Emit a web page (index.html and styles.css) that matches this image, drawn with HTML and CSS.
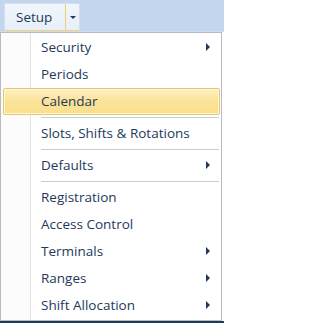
FILE: index.html
```html
<!DOCTYPE html>
<html>
<head>
<meta charset="utf-8">
<link rel="stylesheet" href="styles.css">
</head>
<body>
<div class="toolbar">
  <div class="split-btn">
    <span class="btn-label">Setup</span>
    <span class="btn-drop"><span class="down-arrow"></span></span>
  </div>
</div>
<div class="menu">
  <div class="item">Security<span class="sub"></span></div>
  <div class="item">Periods</div>
  <div class="item active">Calendar</div>
  <div class="sep"></div>
  <div class="item">Slots, Shifts &amp; Rotations</div>
  <div class="sep"></div>
  <div class="item">Defaults<span class="sub"></span></div>
  <div class="sep"></div>
  <div class="item">Registration</div>
  <div class="item">Access Control</div>
  <div class="item">Terminals<span class="sub"></span></div>
  <div class="item">Ranges<span class="sub"></span></div>
  <div class="item">Shift Allocation<span class="sub"></span></div>
</div>
<div class="desk"></div>
</body>
</html>
```

FILE: styles.css
```css
html, body {
  margin: 0;
  padding: 0;
  background: #ffffff;
}
body {
  width: 224px;
  height: 323px;
  overflow: hidden;
  font-family: "Open Sans", "Noto Sans", sans-serif;
  font-size: 13.5px;
  color: #1e395b;
}
.toolbar {
  height: 32px;
  background: #c3d6ed;
  box-sizing: border-box;
  padding: 3px 0 0 4px;
  border-bottom: 1px solid #cfdbea;
}
.split-btn {
  width: 76px;
  height: 28px;
  box-sizing: border-box;
  display: flex;
  background: linear-gradient(#f1f6fc, #e7eff9);
  border: 1px solid #d3dfee;
  border-bottom: 1px solid #f2d37a;
  border-radius: 2px 2px 0 0;
}
.btn-label {
  width: 61px;
  box-sizing: border-box;
  display: flex;
  align-items: center;
  padding-left: 11px;
  padding-bottom: 1px;
  border-right: 1px solid #efcd6f;
}
.btn-drop {
  flex: 1;
  display: flex;
  align-items: center;
  justify-content: center;
}
.down-arrow {
  width: 0;
  height: 0;
  border-left: 3px solid transparent;
  border-right: 3px solid transparent;
  border-top: 3px solid #1e395b;
}
.menu {
  width: 222px;
  box-sizing: border-box;
  border: 1px solid #b8bcc2;
  padding: 1px;
  background: linear-gradient(to right, #fcfcfc 0, #fcfcfc 29px, #e2e3e3 29px, #e2e3e3 30px, #ffffff 30px);
}
.item {
  height: 27px;
  box-sizing: border-box;
  display: flex;
  align-items: center;
  padding-left: 37px;
  padding-right: 9px;
  padding-bottom: 1px;
  border: 1px solid transparent;
  margin-left: 1px;
}
.item.active {
  background: linear-gradient(#fdf1c3, #fbe39a 45%, #fadf8c);
  border-color: #e7c76e;
  border-radius: 2px;
  box-shadow: inset 0 0 0 1px #fff7d9;
}
.sub {
  margin-left: auto;
  width: 0;
  height: 0;
  border-top: 4px solid transparent;
  border-bottom: 4px solid transparent;
  border-left: 4px solid #1e395b;
}
.sep {
  height: 5px;
  box-sizing: border-box;
  margin-left: 39px;
  margin-right: 1px;
  padding-top: 2px;
}
.sep::before {
  content: "";
  display: block;
  height: 1px;
  background: #c5cfdc;
}
.desk {
  height: 3px;
  background: #1c3a5e;
}
```
